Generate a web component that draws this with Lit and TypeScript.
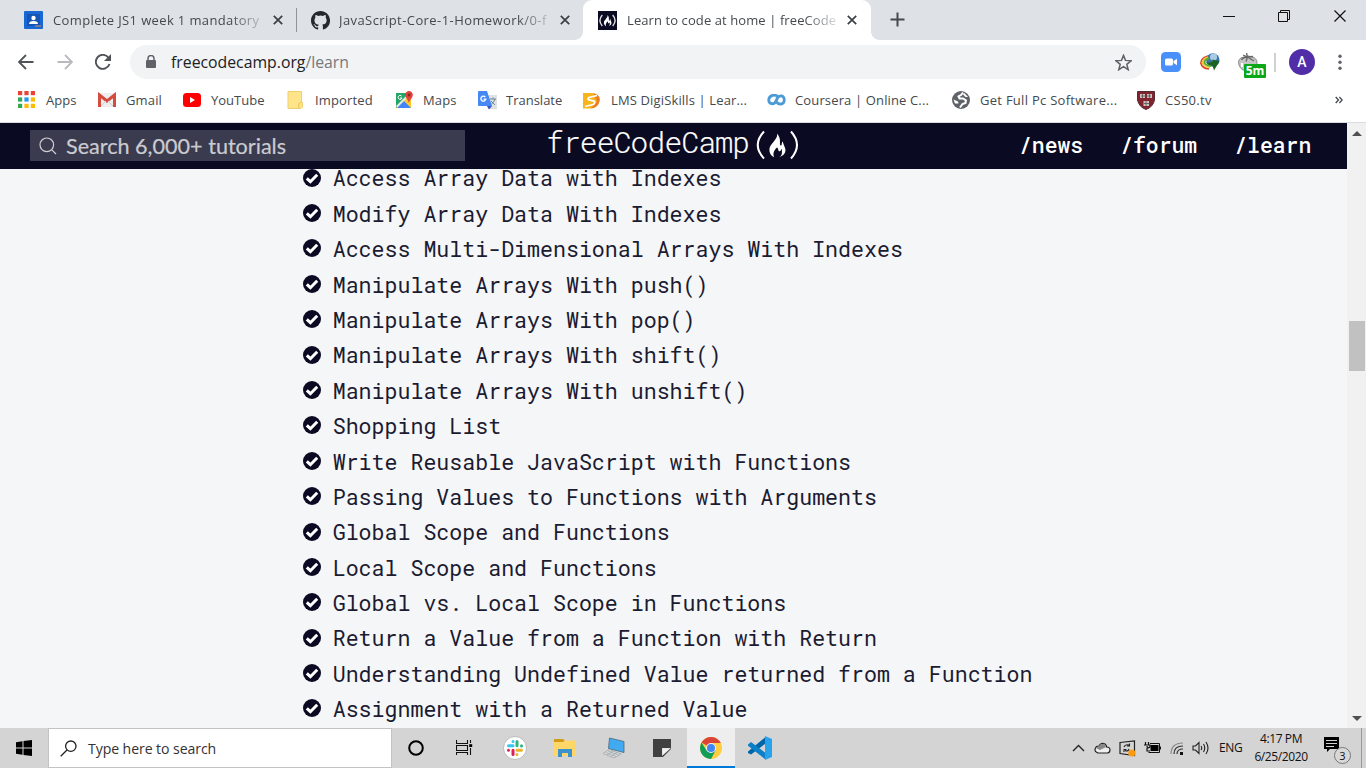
import { LitElement, html, css, svg } from "lit";
import { customElement } from "lit/decorators.js";

const LESSONS = [
  "Access Array Data with Indexes",
  "Modify Array Data With Indexes",
  "Access Multi-Dimensional Arrays With Indexes",
  "Manipulate Arrays With push()",
  "Manipulate Arrays With pop()",
  "Manipulate Arrays With shift()",
  "Manipulate Arrays With unshift()",
  "Shopping List",
  "Write Reusable JavaScript with Functions",
  "Passing Values to Functions with Arguments",
  "Global Scope and Functions",
  "Local Scope and Functions",
  "Global vs. Local Scope in Functions",
  "Return a Value from a Function with Return",
  "Understanding Undefined Value returned from a Function",
  "Assignment with a Returned Value",
];

const glyph = (w: number, h: number, body: unknown, cls = "") =>
  html`<svg class="glyph ${cls}" width=${w} height=${h} viewBox="0 0 ${w} ${h}" fill="none">${body}</svg>`;

const FLAME = "M8.5 0C9.5 4 7 6 4.5 9.5C1.5 13 0 15 .5 19C1 22 3 24.5 5.5 25.5C4 22 5 19.5 6.5 17.5C7.5 16 8 15 8.7 15C10.5 16.5 9.5 18.5 11 19C12.5 19.5 13 18 13 16.5C14.5 18 13.8 20 13.8 21.5C13.5 23.5 12.5 24.5 11 25.5C15.5 24 18.5 21 17.5 16.5C17 14 15.5 12 14.8 8.5C13 10 14.5 13 12.5 12.8C10.5 12 14 5.5 8.5 0Z";

const apps = glyph(18, 18, [0, 1, 2, 3, 4, 5, 6, 7, 8].map((i) => svg`<rect x=${(i % 3) * 6.4} y=${Math.floor(i / 3) * 6.4} width="4.2" height="4.2" fill=${["#ea4335", "#ea4335", "#ea4335", "#34a853", "#2196f3", "#fbbc05", "#34a853", "#fbbc05", "#fbbc05"][i]}/>`));
const gmail = glyph(18, 16, svg`<rect width="18" height="14" y="1" rx="1" fill="#eee"/><path d="M1.5 15V3L9 9L16.5 3V15" stroke="#d54b3d" stroke-width="3"/><path d="M3 14L8 9M15 14L10 9" stroke="#d0d0d0"/>`);
const youtube = glyph(18, 14, svg`<rect width="18" height="14" rx="3.5" fill="#f00"/><path d="M7 4L12 7L7 10Z" fill="#fff"/>`);
const folder = glyph(16, 18, svg`<path d="M1 .5H14.5V11.5H15.5V16L14 17.5H1Z" fill="#ffe48a" stroke="#efd06c"/><path d="M14.5 11.5C12 11 11.5 13 12 17.5" stroke="#e8bf4f"/>`);
const maps = glyph(18, 18, svg`<path d="M1 2H16V17H1Z" fill="#fbc02d"/><path d="M1 2H13L8 10L1 17Z" fill="#23a565"/><path d="M1 15L13 3L17 7L9 13L4 18Z" fill="#e7e8e8"/><path d="M9 10L16 17V11L12 7Z" fill="#ffca28"/><path d="M2 17L9 10L16 17Z" fill="#4285f4"/><path d="M14 0A3.8 3.8 0 0 1 17.8 4C17.8 7 14.8 8 14 12C13 8 10.2 7 10.2 4A3.8 3.8 0 0 1 14 0Z" fill="#e2443b"/><circle cx="14" cy="4" r="1.4" fill="#842b25"/><path d="M6.5 5A2 2 0 1 0 7 7H5" stroke="#fff"/>`);
const translate = glyph(19, 19, svg`<path d="M7 4H19V18H10Z" fill="#dfe1e3"/><path d="M12 8H18M15 6.5V8M17 8C16 11 14 13 12 14M13 10L17 14" stroke="#6b8792"/><path d="M0 1Q0 0 1 0H9L14 15H1Q0 15 0 14Z" fill="#4688f4"/><path d="M9 15H14L11 18.5Z" fill="#3b53c4"/><path d="M7.3 6A2.5 2.5 0 1 0 7.8 8.2H5.5" stroke="#fff" stroke-width="1.3"/>`);
const lms = glyph(17, 17, svg`<path d="M0 1H9Q17 2 16.5 9Q15 16 8 16.5H0Z" fill="#f8b51b"/><path d="M10 1Q18 3 16.5 9Q15 16 8 16.5L14 9Z" fill="#ef7c22"/><path d="M14 3.5L6 5.5Q4 7 6 8L11 9Q13 11 10 12.5L2 14.5" stroke="#fff" stroke-width="1.8"/>`);
const coursera = glyph(19, 12, svg`<path d="M12 3.5C8.5 -.5 2 1 1.7 6C2 11 8 11 9.5 6C11 1 17 0 17.3 6C17 11 12 11 9.5 8" stroke="#4b9bd8" stroke-width="2.8"/>`);
const globe = glyph(18, 18, svg`<circle cx="9" cy="9" r="9" fill="#5f6368"/><path d="M11 1.5L9 4L6.5 5.5L7.5 7.5H11L14 9.5L13.5 12L10.5 13L8 16.5" stroke="#fff" stroke-width="2"/><path d="M1.5 8.5L6 10.5L6.5 12.5H3Z" fill="#fff"/><path d="M12 1.8L16 6H13.5L11 3.6Z" fill="#fff"/>`);
const shield = glyph(18, 19, svg`<path d="M.5 .5H17.5V9Q16 16 9 18.5Q2 16 .5 9Z" fill="#84222e" stroke="#522e33"/><path d="M3 3H8V7H3ZM10 3H15V7H10ZM6.5 10H12V15H6.5Z" fill="#c9c4c0"/><path d="M5.5 3V7M12.5 3V7M9 10V15M4 5H14M7 12.5H12" stroke="#5a5150" stroke-width=".8"/>`);

const BOOKMARKS: { text: string; icon: unknown; width: number; cls: string }[] = [
  { text: "Apps", icon: apps, width: 80, cls: "" },
  { text: "Gmail", icon: gmail, width: 85, cls: "loose" },
  { text: "YouTube", icon: youtube, width: 104, cls: "" },
  { text: "Imported", icon: folder, width: 108, cls: "loose" },
  { text: "Maps", icon: maps, width: 83, cls: "loose" },
  { text: "Translate", icon: translate, width: 105, cls: "" },
  { text: "LMS DigiSkills | Lear...", icon: lms, width: 184, cls: "loose" },
  { text: "Coursera | Online C...", icon: coursera, width: 185, cls: "loose" },
  { text: "Get Full Pc Software...", icon: globe, width: 185, cls: "looser" },
  { text: "CS50.tv", icon: shield, width: 100, cls: "looser" },
];

const cross = glyph(10, 10, svg`<path d="M.8 .8L9.2 9.2M9.2 .8L.8 9.2" stroke="#3c4043" stroke-width="1.7"/>`);

@customElement("tab-strip")
class TabStrip extends LitElement {
  static styles = css`
    :host { display: flex; height: 40px; background: #dee1e6; font: 13px/18px "Open Sans", "Noto Sans", sans-serif; color: #45494d; }
    .glyph { flex: none; display: block; }
    .tab { display: flex; align-items: center; height: 40px; box-sizing: border-box; flex: none; }
    .first { width: 297px; padding-left: 24px; }
    .second { width: 286px; padding-left: 14px; }
    .active { width: 288px; padding-left: 15px; background: #fff; border-radius: 9px 9px 0 0; }
    .wedge { width: 8px; height: 8px; align-self: end; background: radial-gradient(circle at 100% 0, #dee1e6 7.5px, #fff 8px); }
    .left { margin-left: -8px; background: radial-gradient(circle at 0 0, #dee1e6 7.5px, #fff 8px); }
    .title { white-space: nowrap; height: 18px; width: 211px; margin: 0 9px 0 10px; -webkit-mask-image: linear-gradient(90deg, #000 84%, rgba(0, 0, 0, .15) 100%); letter-spacing: .37px; }
    .second .title { width: 212px; margin: 0 9px 0 9px; letter-spacing: .42px; }
    .active .title { width: 211px; margin: 0 9px 0 10px; letter-spacing: .09px; }
    .sep { width: 1px; height: 24px; margin: 8px 0 0 -1px; background: #909397; }
    .plus { margin: 12px 0 0 11px; }
    .window { margin-left: auto; display: flex; gap: 43px; padding: 10px 20px 0 0; }
  `;
  render() {
    return html`
      <div class="tab first">
        ${glyph(19, 18, svg`<rect width="19" height="18" rx="1" fill="#1967d2"/><rect x="3" y="3" width="13" height="12" fill="#1555b5"/><circle cx="9.5" cy="7" r="2.2" fill="#fff"/><path d="M5 13Q5 10 9.5 10Q14 10 14 13Z" fill="#fff"/><path d="M11 15H17" stroke="#779" stroke-width="2"/>`)}
        <span class="title">Complete JS1 week 1 mandatory</span>${cross}
      </div>
      <div class="sep"></div>
      <div class="tab second">
        ${glyph(19, 19, svg`<path transform="scale(1.19)" fill="#24292e" d="M8 0C3.58 0 0 3.58 0 8c0 3.54 2.29 6.53 5.47 7.59.4.07.55-.17.55-.38 0-.19-.01-.82-.01-1.49-2.01.37-2.53-.49-2.69-.94-.09-.23-.48-.94-.82-1.13-.28-.15-.68-.52-.01-.53.63-.01 1.08.58 1.23.82.72 1.21 1.87.87 2.33.66.07-.52.28-.87.51-1.07-1.78-.2-3.64-.89-3.64-3.95 0-.87.31-1.59.82-2.15-.08-.2-.36-1.02.08-2.12 0 0 .67-.21 2.2.82a7.6 7.6 0 0 1 4 0c1.53-1.04 2.2-.82 2.2-.82.44 1.1.16 1.92.08 2.12.51.56.82 1.27.82 2.15 0 3.07-1.87 3.75-3.65 3.95.29.25.54.73.54 1.48 0 1.07-.01 1.93-.01 2.2 0 .21.15.46.55.38A8 8 0 0 0 16 8c0-4.42-3.58-8-8-8z"/>`)}
        <span class="title">JavaScript-Core-1-Homework/0-f</span>${cross}
      </div>
      <div class="wedge left"></div>
      <div class="tab active">
        ${glyph(19, 19, svg`<rect width="19" height="19" fill="#0a0a23"/><path d="M4.3 4Q-.5 9.5 4.3 15M14.7 4Q19.5 9.5 14.7 15" stroke="#ddd" stroke-width="1.4"/><path transform="translate(5.7 4) scale(.44)" d=${FLAME} fill="#fff"/>`)}
        <span class="title">Learn to code at home | freeCode</span>${cross}
      </div>
      <div class="wedge"></div>
      <div class="plus">${glyph(15, 15, svg`<path d="M7.5 .5V14.5M.5 7.5H14.5" stroke="#45494d" stroke-width="2"/>`)}</div>
      <div class="window">
        ${glyph(12, 12, svg`<path d="M0 6.5H12" stroke="#111"/>`)}
        ${glyph(13, 13, svg`<path d="M.5 2.5H9.5V11.5H.5ZM2.5 2V.5H11.5V9.5H10" stroke="#111"/>`)}
        ${glyph(12, 12, svg`<path d="M.5 .5L11.5 11.5M11.5 .5L.5 11.5" stroke="#111" stroke-width="1.2"/>`)}
      </div>`;
  }
}

@customElement("browser-toolbar")
class BrowserToolbar extends LitElement {
  static styles = css`
    :host { display: block; height: 82px; background: #fff; border-bottom: 1px solid #d9dbde; font-family: "Open Sans", "Noto Sans", sans-serif; }
    .glyph { flex: none; display: block; }
    .row { display: flex; align-items: center; height: 34px; padding: 5px 0 0 18px; }
    .back { margin-right: 23px; } .forward { margin-right: 22px; } .reload { margin-right: 19px; }
    .omnibox { box-sizing: border-box; width: 1016px; height: 34px; border-radius: 17px; background: #f1f3f4; display: flex; align-items: center; padding: 0 14px 0 16px; }
    .url { margin-left: 15px; font-size: 15.8px; line-height: 20px; color: #202124; }
    .path { color: #75797e; }
    .star { margin-left: auto; }
    .zoom { margin-left: 15px; } .idm { margin-left: 19px; } .tomato { margin-left: 18px; display: grid; width: 28px; height: 30px; }
    .tomato > * { grid-area: 1 / 1; }
    .fruit { margin-top: 5px; }
    .badge { align-self: end; justify-self: end; width: 22px; height: 14px; margin: 0 0 -1px; background: #0ca717; color: #fff; font: bold 12px/14px "Open Sans", sans-serif; text-align: center; border-radius: 1px; position: relative; }
    .rule { width: 2px; height: 19px; background: #cfd1d3; margin: 0 13px 0 8px; }
    .avatar { width: 26px; height: 26px; border-radius: 50%; background: #512da8; color: #fff; font: 500 14px/26px Roboto, sans-serif; text-align: center; }
    .dots { margin-left: 23px; }
    .marks { display: flex; height: 42px; align-items: center; padding-left: 18px; }
    .mark { display: flex; align-items: center; flex: none; font-size: 13px; line-height: 18px; color: #45494d; white-space: nowrap; }
    .loose { letter-spacing: .14px; }
    .looser { letter-spacing: .28px; }
    .icon { width: 28px; flex: none; display: flex; align-items: center; }
    .more { margin-left: auto; margin-right: 23px; }
  `;
  render() {
    return html`
      <div class="row">
        ${glyph(16, 16, svg`<path d="M15.5 8H1.5M8 1L1 8L8 15" stroke="#505357" stroke-width="1.8"/>`, "back")}
        ${glyph(16, 16, svg`<path d="M.5 8H14.5M8 1L15 8L8 15" stroke="#b8babd" stroke-width="1.8"/>`, "forward")}
        ${glyph(16, 16, svg`<path d="M13.7 4A7 7 0 1 0 14.5 10" stroke="#505357" stroke-width="1.9"/><path d="M16 0V7H9Z" fill="#505357"/>`, "reload")}
        <div class="omnibox">
          ${glyph(10, 14, svg`<path d="M2 6V3.5A3 3 0 0 1 8 3.5V6" stroke="#5f6368" stroke-width="1.5"/><rect y="5" width="10" height="8" rx="1" fill="#5f6368"/>`)}
          <span class="url">freecodecamp.org<span class="path">/learn</span></span>
          ${glyph(17, 17, svg`<path d="M8.5 1.4L10.5 6.4L16 6.8L11.8 10.3L13.2 15.7L8.5 12.7L3.8 15.7L5.2 10.3L1 6.8L6.5 6.4Z" stroke="#5f6368" stroke-width="1.5"/>`, "star")}
        </div>
        ${glyph(20, 20, svg`<rect width="20" height="20" rx="4.5" fill="#4a90fb"/><rect x="4" y="6.5" width="8" height="7" rx="1.5" fill="#fff"/><path d="M12.5 9L16 6.7V13.3L12.5 11Z" fill="#fff"/>`, "zoom")}
        ${glyph(20, 20, svg`<circle cx="12.8" cy="8" r="6.7" fill="#3a72ad"/><circle cx="13.5" cy="5" r="3.6" fill="#a8cbe6"/><path d="M8 4Q1 6 .8 11Q2 16.5 9 17" stroke="#d9452a" stroke-width="1.6"/><path d="M8 5Q2.5 7 2.5 11Q4 15 10 15.5" stroke="#f4ca37" stroke-width="1.8"/><path d="M9 6Q4 8 4.5 11Q6 13.5 11 14" stroke="#5aac35" stroke-width="2"/><path d="M6 9.5Q9 12 13 9L12 7.5L19.5 9L14 18.5L12.5 13.5Q8 14 6 9.5Z" fill="#1b6420"/>`, "idm")}
        <div class="tomato">
          ${glyph(20, 20, svg`<path d="M1 13Q-1 6 6 5Q10 3 15 5Q21 8 18 14Q16 19 10 19Q3 19 1 13Z" fill="#c5c5c5" stroke="#8a8a8a"/><path d="M9.5 5Q5 5 3.5 8M9.5 5L8 9.5M9.5 5L16 9M9.5 5L15 4.5M9.5 5L8.5 1M9.5 5L5 3" stroke="#666" stroke-width="1.3"/><path d="M4 11V15" stroke="#fff" stroke-width="2"/>`, "fruit")}
          <span class="badge">5m</span>
        </div>
        <div class="rule"></div>
        <div class="avatar">A</div>
        ${glyph(4, 17, svg`<circle cx="2" cy="2.3" r="1.7" fill="#5f6368"/><circle cx="2" cy="8.3" r="1.7" fill="#5f6368"/><circle cx="2" cy="14.3" r="1.7" fill="#5f6368"/>`, "dots")}
      </div>
      <div class="marks">
        ${BOOKMARKS.map((b) => html`<div class="mark ${b.cls}" style="width:${b.width}px"><span class="icon">${b.icon}</span><span>${b.text}</span></div>`)}
        ${glyph(8, 8, svg`<path d="M.7 1L3.5 4L.7 7M4.4 1L7.2 4L4.4 7" stroke="#45494d" stroke-width="1.3"/>`, "more")}
      </div>`;
  }
}

@customElement("learn-page")
class LearnPage extends LitElement {
  static styles = css`
    :host { display: grid; grid-template-columns: 1347px 19px; height: 605px; background: #f5f6f7; overflow: hidden; }
    .glyph { flex: none; display: block; }
    .page { height: 605px; overflow: hidden; }
    .nav { display: flex; height: 46px; background: #0a0a23; align-items: center; box-sizing: border-box; padding-left: 30px; color: #fff; }
    .search { box-sizing: border-box; width: 435px; height: 31px; background: #3b3b4f; display: flex; align-items: center; padding-left: 9px; gap: 9px; margin-bottom: 1px; font: 21.6px/30px Lato, sans-serif; color: #cbcbd0; -webkit-text-stroke: .2px #cbcbd0; white-space: nowrap; }
    .logo { display: flex; align-items: center; width: 259px; margin: 0 0 8px 82px; font: 300 29.5px/38px "Roboto Mono", "Liberation Mono", monospace; letter-spacing: -.78px; -webkit-text-stroke: .2px #fff; white-space: nowrap; }
    .word { display: block; width: 209px; margin-left: -1px; }
    .parens { margin-top: 6px; }
    .links { display: flex; gap: 37px; margin: 0 0 3px 213px; font: 500 21.4px/30px "Roboto Mono", "Liberation Mono", monospace; }
    .list { margin: -8.6px 0 0; padding: 0 0 0 303px; list-style: none; font: 21.6px/35.4px "Roboto Mono", "Liberation Mono", monospace; color: #1b1b32; }
    .item { display: flex; align-items: center; height: 35.4px; gap: 11.7px; white-space: pre; }
    .item .glyph { margin-top: -1px; }
    .bar { display: flex; flex-direction: column; align-items: center; background: #f1f1f1; padding: 8px 0 7px 1px; box-sizing: border-box; height: 605px; }
    .thumb { width: 16px; height: 50px; background: #c1c1c1; margin: 185px 0 auto; }
    .clip { overflow: hidden; height: 559px; }
  `;
  render() {
    return html`
      <div class="page">
        <div class="nav">
          <div class="search">${glyph(18, 18, svg`<circle cx="7.8" cy="7.8" r="6.8" stroke="#d0d0d5" stroke-width="1.2"/><path d="M12.8 12.8L17 17" stroke="#d0d0d5" stroke-width="1.2"/>`)}<span>Search 6,000+ tutorials</span></div>
          <div class="logo"><span class="word">freeCodeCamp</span>${glyph(46, 30, svg`<path d="M9 1.5Q-3.5 15 9 28.5M36 1.5Q48 15 36 28.5" stroke="#fff" stroke-width="2"/><path transform="translate(14 3.5) scale(.93)" d=${FLAME} fill="#fff"/>`, "parens")}</div>
          <div class="links"><span>/news</span><span>/forum</span><span>/learn</span></div>
        </div>
        <div class="clip"><ul class="list">
          ${LESSONS.map((t) => html`<li class="item">${glyph(18, 18, svg`<circle cx="9" cy="9" r="9" fill="#0a0a23"/><path d="M3.8 9.3L7.4 12.7L14.2 5.7" stroke="#fff" stroke-width="3"/>`)}<span>${t}</span></li>`)}
        </ul></div>
      </div>
      <div class="bar">
        ${glyph(10, 5, svg`<path d="M0 5L5 0L10 5Z" fill="#505050"/>`)}
        <div class="thumb"></div>
        ${glyph(10, 5, svg`<path d="M0 0L5 5L10 0Z" fill="#505050"/>`)}
      </div>`;
  }
}

@customElement("task-bar")
class TaskBar extends LitElement {
  static styles = css`
    :host { display: flex; height: 40px; background: #d4d4d4; font: 14px/18px "Open Sans", "Noto Sans", sans-serif; color: #111; }
    .glyph { flex: none; display: block; }
    .start { width: 48px; flex: none; display: grid; place-items: center; }
    .search { box-sizing: border-box; flex: none; width: 344px; border: 1px solid #c3c3c3; background: #fff; display: flex; align-items: center; padding-left: 11px; gap: 11px; color: #333; }
    .prompt { font-size: 14.1px; letter-spacing: -.08px; margin-top: 1px; }
    .app { width: 48px; flex: none; box-sizing: border-box; display: grid; place-items: center; margin-left: 1px; }
    .system { margin-left: 0; }
    .system + .running { margin-left: 3px; }
    .current { background: #eee; border-bottom: 2px solid #0078d7; padding-top: 2px; }
    .tray { margin-left: auto; display: flex; align-items: center; }
    .tray .glyph { margin-right: 8px; }
    .tray .caret { margin-right: 9px; }
    .tray .battery { margin-right: 9px; }
    .tray .wifi { margin-right: 8px; }
    .tray .sound { margin-right: 10px; }
    .lang { width: 24px; font-size: 12px; letter-spacing: -.35px; }
    .clock { width: 76px; text-align: center; font-size: 12px; line-height: 18px; letter-spacing: -.4px; }
    .notice { display: grid; width: 28px; height: 28px; margin: 4px 10px 0 4px; }
    .notice > * { grid-area: 1 / 1; }
    .count { align-self: end; justify-self: end; width: 15px; height: 15px; border: 1px solid #777; border-radius: 50%; background: #d8d8d8; font-size: 11px; line-height: 15px; text-align: center; }
    .edge { width: 5px; height: 40px; border-left: 1px solid #999; box-sizing: border-box; }
  `;
  render() {
    return html`
      <div class="start">${glyph(16, 16, svg`<path d="M0 2.3L6.5 1.3V7.5H0ZM7.5 1.1L16 0V7.5H7.5ZM0 8.5H6.5V14.7L0 13.7ZM7.5 8.5H16V16L7.5 14.9Z" fill="#000"/>`)}</div>
      <div class="search">${glyph(17, 17, svg`<circle cx="10.8" cy="6.2" r="5.2" stroke="#222" stroke-width="1.3"/><path d="M7 10L.7 16.3" stroke="#222" stroke-width="1.3"/>`)}<span class="prompt">Type here to search</span></div>
      <div class="app system">${glyph(16, 16, svg`<circle cx="8" cy="8" r="6.8" stroke="#000" stroke-width="2"/>`)}</div>
      <div class="app system">${glyph(17, 16, svg`<path d="M.5 0V3.5H11.5V0M.5 15V12.5H11.5V15M.5 5.5H11.5V10.5H.5ZM14.5 0V3M14.5 8V15" stroke="#111" stroke-width="1.1"/><rect x="13.2" y="4.2" width="3" height="2.8" fill="#000"/>`)}</div>
      <div class="app running">${glyph(24, 24, svg`<circle cx="12" cy="12" r="11.5" fill="#fff" stroke="#bbb"/><path d="M10 5.5V5.6M5.5 9.8H10" stroke="#36c5f0" stroke-width="3" stroke-linecap="round"/><path d="M14 5.5V9.8M18.5 9.8V9.9" stroke="#2eb67d" stroke-width="3" stroke-linecap="round"/><path d="M14 18.4V18.5M14 14.2H18.5" stroke="#ecb22e" stroke-width="3" stroke-linecap="round"/><path d="M10 14.2V18.5M5.5 14.2V14.3" stroke="#e01e5a" stroke-width="3" stroke-linecap="round"/>`)}</div>
      <div class="app running">${glyph(21, 18, svg`<path d="M0 0H9L11 2H20V8H0Z" fill="#d69a19"/><path d="M0 3H9L11 1.5H21V17H0Z" fill="#ffd768"/><path d="M4 18V10H18V18H14V14H8V18Z" fill="#3e91cf"/>`)}</div>
      <div class="app running">${glyph(23, 22, svg`<path d="M7.5 1L22 4.5V15.5L6.5 11.5Z" fill="#42aaf0" stroke="#476a80" stroke-width=".8"/><path d="M1 16.5L7 12.5L19 17L12 21Z" fill="#d8dcdf" stroke="#a2a8ac" stroke-width=".8"/><path d="M4 15.5L14 19.5M6 14L16.5 18M5 18L11 14M9 19.5L15 15.5" stroke="#9aa0a4" stroke-width=".7"/>`)}</div>
      <div class="app running">${glyph(18, 18, svg`<path d="M0 0H18V9H9V18H0Z" fill="#414141"/><path d="M9.5 9.5H17.5L9.5 17.5Z" fill="#f2f2f2"/><path d="M18 9V10L10 18H9V17Z" fill="#414141"/>`)}</div>
      <div class="app running current">${glyph(22, 22, svg`<circle cx="11" cy="11" r="11" fill="#ffcd40"/><path d="M11 11L1.5 5.5A11 11 0 0 1 20.5 5.5L21 6H11Z" fill="#db4437"/><path d="M1.5 5.5A11 11 0 0 0 11 22L15.5 13.5L11 11L6.5 13.5Z" fill="#0f9d58"/><circle cx="11" cy="11" r="5" fill="#f1f1f1"/><circle cx="11" cy="11" r="4" fill="#4285f4"/>`)}</div>
      <div class="app running">${glyph(24, 24, svg`<path d="M0 15.5L17.5 1V7.5L3 18.5L0 17Z" fill="#0065a9"/><path d="M0 8.5L3 6L17.5 17V23.5L0 9.8Z" fill="#0b80c8"/><path d="M17 0L24 3V21L17 24Z" fill="#28a2ed"/>`)}</div>
      <div class="tray">
        ${glyph(13, 8, svg`<path d="M1 7L6.5 1.5L12 7" stroke="#222" stroke-width="1.4"/>`, "caret")}
        ${glyph(17, 12, svg`<path d="M3 10.5Q0 9 1.5 6Q2 4 5 4Q7 0 11 2Q13 4 12.5 5Q16 5 16 8Q16 10.5 13.5 11H4Z" fill="#eee" stroke="#222" stroke-width="1.2"/><path d="M5 4Q7 1 10.5 2L12 5L6 8L2 6Z" fill="#888"/>`)}
        ${glyph(17, 17, svg`<path d="M1 2.5L15.5 1V15.5L1 13.5Z" stroke="#222" stroke-width="1.2"/><path d="M5 7Q6 4 10 5M10.5 3.5V6H8M10 9Q9 12 6 10.5M5 12V9.5H7.5" stroke="#222" stroke-width="1.1"/><circle cx="12.8" cy="13" r="3.6" fill="#fb9b13"/>`)}
        ${glyph(17, 12, svg`<path d="M1.5 0V3M4.5 0V3M0 3H6V5Q3 7 3 4M3 6V9H6" stroke="#111" stroke-width="1.2"/><rect x="6.5" y="3" width="8" height="6" fill="#000"/><path d="M6 1.5H15.5V10.5H4.5" stroke="#111"/><rect x="15.5" y="4.5" width="1.5" height="3" fill="#111"/>`, "battery")}
        ${glyph(14, 13, svg`<path d="M1 12Q1 1 13 1" stroke="#888" stroke-width="1.2"/><path d="M4 12Q4 4 13 4M7 12Q7 7 13 7" stroke="#333" stroke-width="1.2"/><path d="M10 13V10H13V13Z" fill="#111"/>`, "wifi")}
        ${glyph(17, 14, svg`<path d="M1 5H3.5L7 1.5V12.5L3.5 9H1Z" stroke="#222" stroke-width="1.1"/><path d="M9 5Q10.5 7 9 9M11.5 3Q14 7 11.5 11M14 1Q18 7 14 13" stroke="#222" stroke-width="1.1"/>`, "sound")}
        <span class="lang">ENG</span>
        <div class="clock"><div>4:17 PM</div><div>6/25/2020</div></div>
        <div class="notice">${glyph(17, 18, svg`<path d="M1 1H16V13H7L4 16V13H1Z" fill="#000"/><path d="M3 4.5H14M3 7.5H14M3 10.5H11" stroke="#d4d4d4"/>`)}<span class="count">3</span></div>
        <div class="edge"></div>
      </div>`;
  }
}

@customElement("app-root")
class AppRoot extends LitElement {
  static styles = css`
    :host { display: flex; flex-direction: column; width: 1366px; height: 768px; overflow: hidden; background: #fff; }
  `;
  render() {
    return html`<tab-strip></tab-strip><browser-toolbar></browser-toolbar><learn-page></learn-page><task-bar></task-bar>`;
  }
}
